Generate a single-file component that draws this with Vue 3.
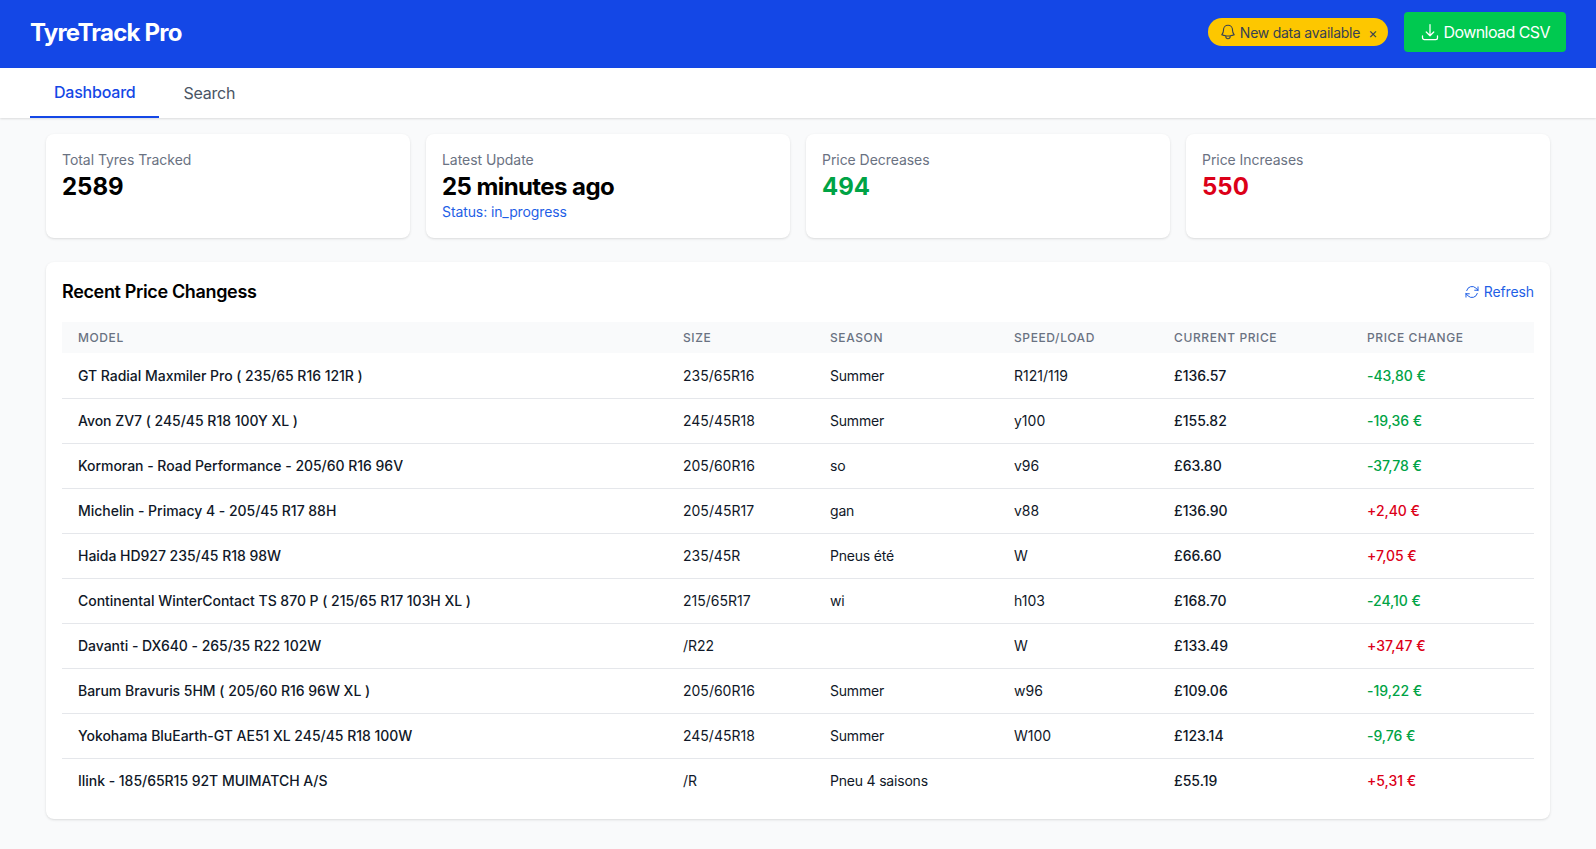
<script setup>
const stats = [
  { label: 'Total Tyres Tracked', value: '2589' },
  { label: 'Latest Update', value: '25 minutes ago', note: 'Status: in_progress' },
  { label: 'Price Decreases', value: '494', tone: 'down' },
  { label: 'Price Increases', value: '550', tone: 'up' }
]

const rows = [
  ['GT Radial Maxmiler Pro ( 235/65 R16 121R )', '235/65R16', 'Summer', 'R121/119', '£136.57', '-43,80 €'],
  ['Avon ZV7 ( 245/45 R18 100Y XL )', '245/45R18', 'Summer', 'y100', '£155.82', '-19,36 €'],
  ['Kormoran - Road Performance - 205/60 R16 96V', '205/60R16', 'so', 'v96', '£63.80', '-37,78 €'],
  ['Michelin - Primacy 4 - 205/45 R17 88H', '205/45R17', 'gan', 'v88', '£136.90', '+2,40 €'],
  ['Haida HD927 235/45 R18 98W', '235/45R', 'Pneus été', 'W', '£66.60', '+7,05 €'],
  ['Continental WinterContact TS 870 P ( 215/65 R17 103H XL )', '215/65R17', 'wi', 'h103', '£168.70', '-24,10 €'],
  ['Davanti - DX640 - 265/35 R22 102W', '/R22', '', 'W', '£133.49', '+37,47 €'],
  ['Barum Bravuris 5HM ( 205/60 R16 96W XL )', '205/60R16', 'Summer', 'w96', '£109.06', '-19,22 €'],
  ['Yokohama BluEarth-GT AE51 XL 245/45 R18 100W', '245/45R18', 'Summer', 'W100', '£123.14', '-9,76 €'],
  ['Ilink - 185/65R15 92T MUIMATCH A/S', '/R', 'Pneu 4 saisons', '', '£55.19', '+5,31 €']
]
</script>

<template>
  <div class="page">
    <header class="topbar">
      <h1 class="brand">TyreTrack Pro</h1>
      <div class="actions">
        <div class="notice">
          <svg class="icon-md" viewBox="0 0 24 24" fill="none" stroke="currentColor" stroke-width="1.5" stroke-linecap="round" stroke-linejoin="round">
            <path d="M14.857 17.082a23.848 23.848 0 0 0 5.454-1.31A8.967 8.967 0 0 1 18 9.75V9A6 6 0 0 0 6 9v.75a8.967 8.967 0 0 1-2.312 6.022c1.733.64 3.56 1.085 5.455 1.31m5.714 0a24.255 24.255 0 0 1-5.714 0m5.714 0a3 3 0 1 1-5.714 0" />
          </svg>
          <span class="notice-text">New data available</span>
          <span class="close">×</span>
        </div>
        <button class="download">
          <svg class="icon-lg" viewBox="0 0 24 24" fill="none" stroke="currentColor" stroke-width="1.5" stroke-linecap="round" stroke-linejoin="round">
            <path d="M3 16.5v2.25A2.25 2.25 0 0 0 5.25 21h13.5A2.25 2.25 0 0 0 21 18.75V16.5M16.5 12 12 16.5m0 0L7.5 12m4.5 4.5V3" />
          </svg>
          Download CSV
        </button>
      </div>
    </header>

    <nav class="tabs">
      <a class="tab active">Dashboard</a>
      <a class="tab">Search</a>
    </nav>

    <main class="content">
      <section class="stats">
        <div class="card stat" v-for="s in stats" :key="s.label">
          <div class="stat-label">{{ s.label }}</div>
          <div class="stat-value" :class="[s.tone, { wordy: s.note }]">{{ s.value }}</div>
          <div class="stat-note" v-if="s.note">{{ s.note }}</div>
        </div>
      </section>

      <section class="card changes">
        <div class="changes-head">
          <h2>Recent Price Changess</h2>
          <a class="refresh">
            <svg class="icon" viewBox="0 0 24 24" fill="none" stroke="currentColor" stroke-width="1.5" stroke-linecap="round" stroke-linejoin="round">
              <path d="M16.023 9.348h4.992v-.001M2.985 19.644v-4.992m0 0h4.992m-4.993 0 3.181 3.183a8.25 8.25 0 0 0 13.803-3.7M4.031 9.865a8.25 8.25 0 0 1 13.803-3.7l3.181 3.182m0-4.991v4.99" />
            </svg>
            Refresh
          </a>
        </div>
        <table>
          <colgroup>
            <col class="col-model" />
            <col class="col-size" />
            <col class="col-season" />
            <col class="col-speed" />
            <col class="col-price" />
            <col />
          </colgroup>
          <thead>
            <tr>
              <th>Model</th>
              <th>Size</th>
              <th>Season</th>
              <th>Speed/Load</th>
              <th>Current Price</th>
              <th>Price Change</th>
            </tr>
          </thead>
          <tbody>
            <tr v-for="r in rows" :key="r[0]">
              <td class="model">{{ r[0] }}</td>
              <td>{{ r[1] }}</td>
              <td class="season">{{ r[2] }}</td>
              <td>{{ r[3] }}</td>
              <td class="price">{{ r[4] }}</td>
              <td class="delta" :class="r[5][0] === '-' ? 'down' : 'up'">{{ r[5] }}</td>
            </tr>
          </tbody>
        </table>
      </section>
    </main>
  </div>
</template>

<style>
html, body {
  margin: 0;
  background: #f9fafb;
}
</style>

<style scoped>
.page {
  min-height: 849px;
  background: #f9fafb;
  font-family: Inter, "Noto Sans", sans-serif;
  color: #000;
}

.topbar {
  height: 68px;
  box-sizing: border-box;
  padding: 0 30px 4px;
  background: #1447e6;
  display: flex;
  align-items: center;
  justify-content: space-between;
}

.brand {
  margin: 2px 0 0;
  font-size: 24px;
  line-height: 32px;
  font-weight: 700;
  letter-spacing: -0.78px;
  color: #fff;
}

.actions {
  display: flex;
  align-items: center;
  gap: 16px;
}

.notice {
  height: 28px;
  box-sizing: border-box;
  padding: 0 11px;
  border-radius: 14px;
  background: #fdc700;
  color: #364153;
  font-size: 14px;
  display: flex;
  align-items: center;
  gap: 3px;
}

.notice-text {
  letter-spacing: -0.25px;
}

.close {
  margin-left: 5px;
  font-size: 14px;
}

.icon {
  width: 16px;
  height: 16px;
  flex: none;
}

.icon-md {
  width: 18px;
  height: 18px;
  flex: none;
}

.icon-lg {
  width: 20px;
  height: 20px;
  flex: none;
}

.download {
  height: 40px;
  padding: 0 16px;
  border: 0;
  border-radius: 4px;
  background: #00c950;
  color: #fff;
  font: inherit;
  font-size: 16px;
  letter-spacing: -0.56px;
  display: flex;
  align-items: center;
  gap: 3px;
}

.tabs {
  height: 50px;
  box-sizing: border-box;
  padding: 0 30px;
  background: #fff;
  box-shadow: 0 1px 2px rgba(0, 0, 0, 0.12);
  display: flex;
  position: relative;
}

.tab {
  padding: 0 24px;
  font-size: 16px;
  line-height: 50px;
  letter-spacing: -0.22px;
  color: #4a5565;
}

.tab.active {
  color: #1447e6;
  font-weight: 500;
  line-height: 48px;
  height: 50px;
  box-sizing: border-box;
  border-bottom: 2px solid #1447e6;
}

.content {
  padding: 16px 46px;
  display: flex;
  flex-direction: column;
  gap: 24px;
}

.stats {
  display: grid;
  grid-template-columns: repeat(4, 1fr);
  gap: 16px;
}

.card {
  background: #fff;
  border-radius: 8px;
  box-shadow: 0 1px 3px rgba(0, 0, 0, 0.1), 0 1px 2px -1px rgba(0, 0, 0, 0.1);
}

.stat {
  height: 104px;
  box-sizing: border-box;
  padding: 16px;
}

.stat-label {
  font-size: 14px;
  line-height: 20px;
  letter-spacing: -0.05px;
  color: #6a7282;
}

.stat-value {
  padding-top: 2px;
  font-size: 24px;
  line-height: 30px;
  font-weight: 700;
}

.stat-value.wordy {
  letter-spacing: -0.58px;
}

.stat-note {
  font-size: 14px;
  line-height: 20px;
  letter-spacing: -0.1px;
  color: #1f5fe6;
}

.down {
  color: #00a345;
}

.up {
  color: #dc0018;
}

.changes {
  padding: 16px;
}

.changes-head {
  height: 28px;
  margin-bottom: 16px;
  display: flex;
  align-items: center;
  justify-content: space-between;
}

.changes-head h2 {
  margin: 0;
  font-size: 18px;
  line-height: 28px;
  font-weight: 600;
  letter-spacing: -0.35px;
}

.refresh {
  margin-top: -1px;
  font-size: 14px;
  letter-spacing: -0.1px;
  color: #1f5fe6;
  display: flex;
  align-items: center;
  gap: 4px;
}

table {
  width: 100%;
  table-layout: fixed;
  border-collapse: collapse;
}

.col-model {
  width: 605px;
}

.col-size {
  width: 147px;
}

.col-season {
  width: 184px;
}

.col-speed {
  width: 160px;
}

.col-price {
  width: 193px;
}

th {
  height: 31px;
  padding: 0 16px;
  background: #f9fafb;
  text-align: left;
  font-size: 12px;
  font-weight: 500;
  letter-spacing: 0.6px;
  text-transform: uppercase;
  color: #6a7282;
}

td {
  height: 45px;
  box-sizing: border-box;
  padding: 0 16px;
  font-size: 14px;
  color: #101828;
  white-space: nowrap;
  border-bottom: 1px solid #e5e7eb;
}

tbody tr:last-child td {
  border-bottom: 0;
}

.model {
  font-weight: 500;
  letter-spacing: -0.03px;
}

.season {
  letter-spacing: -0.2px;
}

.price {
  font-weight: 500;
}

td.delta {
  font-weight: 500;
  letter-spacing: -0.03px;
}

td.down {
  color: #00a345;
}

td.up {
  color: #dc0018;
}
</style>
